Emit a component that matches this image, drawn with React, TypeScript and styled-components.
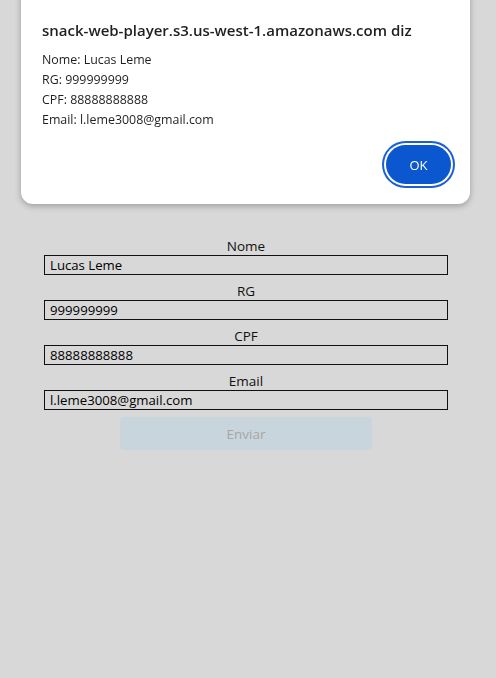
import React, { useState } from 'react';
import styled, { createGlobalStyle } from 'styled-components';

const GlobalStyle = createGlobalStyle`
  html, body {
    margin: 0;
    padding: 0;
    background: #d8d8d8;
    font-family: "Open Sans", "Noto Sans", sans-serif;
  }
`;

const Page = styled.div`
  min-height: 100vh;
  box-sizing: border-box;
  padding-top: 10px;
  display: flex;
  flex-direction: column;
  justify-content: center;
`;

const Form = styled.div`
  margin-left: 44px;
  width: 404px;
  display: flex;
  flex-direction: column;
  gap: 8px;
`;

const Field = styled.div`
  display: flex;
  flex-direction: column;
`;

const Label = styled.div`
  text-align: center;
  font-size: 13.5px;
  line-height: 17px;
  color: #111;
`;

const Input = styled.input`
  box-sizing: border-box;
  height: 20px;
  width: 100%;
  margin: 0;
  padding: 0 5px;
  border: 1px solid #111;
  background: transparent;
  font-family: "Open Sans", "Noto Sans", sans-serif;
  font-size: 13.2px;
  color: #000;
  outline: none;
`;

const Submit = styled.button`
  align-self: center;
  margin-top: -1px;
  width: 252px;
  height: 33px;
  border: none;
  border-radius: 4px;
  background: #c8d5dc;
  color: #a6a6a6;
  font-family: "Open Sans", "Noto Sans", sans-serif;
  font-size: 13.5px;
`;

const Dialog = styled.div`
  position: fixed;
  top: -20px;
  left: 21px;
  width: 449px;
  box-sizing: border-box;
  padding: 40px 21px 20px;
  background: #fff;
  border-radius: 12px;
  box-shadow: 0 2px 6px rgba(0, 0, 0, 0.28);
  color: #1f1f1f;
`;

const DialogTitle = styled.div`
  font-size: 15px;
  font-weight: 600;
  line-height: 20px;
`;

const DialogBody = styled.div`
  margin-top: 10px;
  font-size: 12.4px;
  line-height: 20px;
`;

const Actions = styled.div`
  margin-top: 15px;
  margin-right: -2px;
  display: flex;
  justify-content: flex-end;
`;

const OkButton = styled.button`
  width: 65px;
  height: 39px;
  border: none;
  border-radius: 999px;
  background: #0b57d0;
  color: #fff;
  font-family: "Open Sans", "Noto Sans", sans-serif;
  font-size: 13px;
  box-shadow: 0 0 0 2px #fff, 0 0 0 4px #1a5fd4;
`;

const fields = [
  { label: 'Nome', value: 'Lucas Leme' },
  { label: 'RG', value: '999999999' },
  { label: 'CPF', value: '88888888888' },
  { label: 'Email', value: 'l.leme3008@gmail.com' },
];

export default function App() {
  const [values] = useState(fields);

  return (
    <>
      <GlobalStyle />
      <Page>
        <Form>
          {values.map((f) => (
            <Field key={f.label}>
              <Label>{f.label}</Label>
              <Input value={f.value} readOnly />
            </Field>
          ))}
          <Submit disabled>Enviar</Submit>
        </Form>
      </Page>
      <Dialog>
        <DialogTitle>snack-web-player.s3.us-west-1.amazonaws.com diz</DialogTitle>
        <DialogBody>
          {values.map((f) => (
            <div key={f.label}>
              {f.label}: {f.value}
            </div>
          ))}
        </DialogBody>
        <Actions>
          <OkButton>OK</OkButton>
        </Actions>
      </Dialog>
    </>
  );
}
